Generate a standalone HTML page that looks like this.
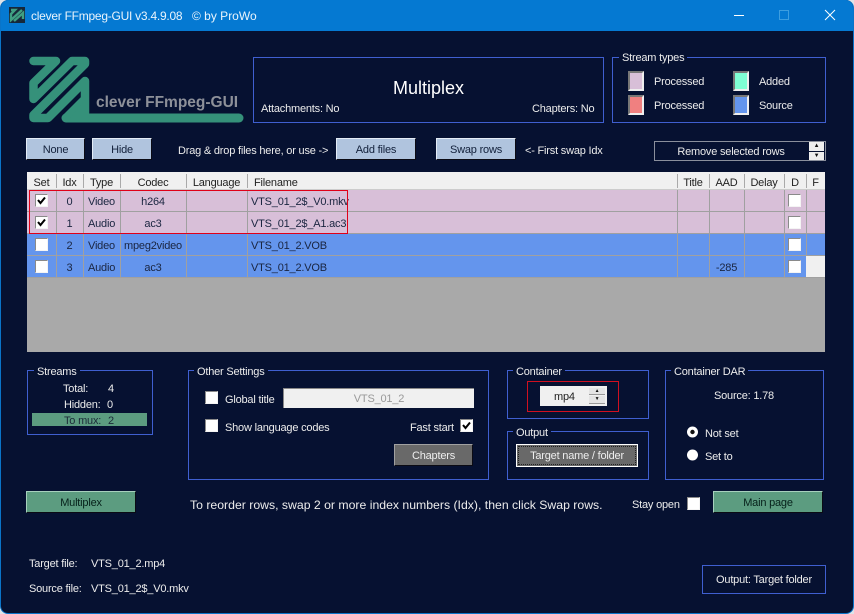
<!DOCTYPE html>
<html><head><meta charset="utf-8"><style>
html,body{margin:0;padding:0;width:854px;height:614px;overflow:hidden;background:#dfe3e8}
*{box-sizing:border-box}
#w{position:absolute;left:0;top:0;width:854px;height:614px;background:#061131;border:1px solid #0a74c8;border-top:0;border-radius:8px;overflow:hidden;font:11px "Liberation Sans",sans-serif;letter-spacing:-.2px;color:#ececec}
#w div,#w span.t{position:absolute;white-space:nowrap}
.t{line-height:14px;transform:translateY(-6px)}
.g{border:1px solid #3f5fd0}
.gt{background:#061131;padding:0 3px;line-height:14px}
.b{text-align:center;line-height:22px;color:#12203a;background:#b0c4de;border:1px solid;border-color:#e4ecf6 #0b0b14 #0b0b14 #e4ecf6}
.gb{background:#5c9c80;color:#06201a;border-color:#a7d0bd #0b0b14 #0b0b14 #a7d0bd}
.c{width:13px;height:13px;background:#fff;border:1px solid;border-color:#8a8a8a #f4f4f4 #f4f4f4 #8a8a8a}
.sw{width:16px;height:20px;border:2px solid;border-color:#777 #eee #eee #777}
.s{width:1px;height:14px;top:174px;background:#aaa}
.l{width:1px;top:190px;height:88px;background:#a0a0a0}
.r{height:1px;left:26px;width:798px;background:#a0a0a0}
.x{color:#1a2540;line-height:14px}
.hd{color:#222;line-height:14px;top:176px}
.ct{text-align:center}
</style></head><body><div id="w">
<div style="left:-1px;top:0;width:856px;height:31px;background:#0579d2"></div>
<svg style="position:absolute;left:8px;top:7px" width="16" height="16" viewBox="0 0 16 16"><rect width="16" height="16" fill="#16283a"/><path d="M2 3H6L2 7V13L13 3M5 14L14 6V12" fill="none" stroke="#3f9f82" stroke-width="2.4"/></svg>
<div style="left:30px;top:8px;font-size:12px;letter-spacing:-.25px;line-height:16px;color:#eaf4fc">clever FFmpeg-GUI v3.4.9.08</div>
<div style="left:191px;top:8px;font-size:12px;letter-spacing:0;line-height:16px;color:#eaf4fc">© by ProWo</div>
<svg style="position:absolute;left:731px;top:8px" width="110" height="16" viewBox="0 0 110 16"><path d="M2 7.5H12" stroke="#fff"/><rect x="47.5" y="2.5" width="9" height="9" fill="none" stroke="#3d9ee0"/><path d="M93 2L103 12M103 2L93 12" stroke="#fff"/></svg>

<svg style="position:absolute;left:27px;top:56px" width="218" height="68" viewBox="28 56 218 68">
<path d="M33.5 61H56L33.5 83V99L72 61H85V64L33.5 115V118H48L85 81V113M66 118L85 99" fill="none" stroke="#35917a" stroke-width="8.5" stroke-linejoin="round" stroke-linecap="round"/>
<path d="M66 118H239" fill="none" stroke="#35917a" stroke-width="9" stroke-linecap="round"/>
<path d="M85 100V118H70Z" fill="#35917a"/>
</svg>
<div style="left:95px;top:94px;font:bold 15.5px/18px 'Liberation Sans',sans-serif;letter-spacing:0;color:#8d9099">clever FFmpeg-GUI</div>

<div class="g" style="left:252px;top:57px;width:351px;height:66px"></div>
<div style="left:252px;top:77px;width:351px;text-align:center;font-size:18px;letter-spacing:0;line-height:22px;color:#fff">Multiplex</div>
<span class="t" style="position:absolute;left:260px;top:108px">Attachments: No</span>
<span class="t" style="position:absolute;left:531px;top:108px">Chapters: No</span>

<div class="g" style="left:611px;top:57px;width:214px;height:66px"></div>
<div class="gt" style="left:618px;top:51px">Stream types</div>
<div class="sw" style="left:627px;top:71px;background:#d8bfd8"></div>
<div class="sw" style="left:627px;top:95px;background:#f08080"></div>
<div class="sw" style="left:732px;top:71px;background:#7fffd4"></div>
<div class="sw" style="left:732px;top:95px;background:#6495ed"></div>
<span class="t" style="position:absolute;left:653px;top:81px">Processed</span>
<span class="t" style="position:absolute;left:653px;top:105px">Processed</span>
<span class="t" style="position:absolute;left:758px;top:81px">Added</span>
<span class="t" style="position:absolute;left:758px;top:105px">Source</span>

<div class="b" style="left:25px;top:138px;width:59px;height:22px">None</div>
<div class="b" style="left:91px;top:138px;width:60px;height:22px">Hide</div>
<span class="t" style="position:absolute;left:177px;top:150px">Drag &amp; drop files here, or use -&gt;</span>
<div class="b" style="left:335px;top:138px;width:80px;height:22px">Add files</div>
<div class="b" style="left:435px;top:138px;width:80px;height:22px">Swap rows</div>
<span class="t" style="position:absolute;left:524px;top:150px">&lt;- First swap Idx</span>
<div style="left:653px;top:141px;width:172px;height:20px;border:1px solid #8a8f9c;text-align:center;line-height:20px;padding-right:18px">Remove selected rows</div>
<div style="left:808px;top:142px;width:15px;height:9px;background:#eee;color:#111;font-size:6px;line-height:9px;text-align:center">▲</div>
<div style="left:808px;top:152px;width:15px;height:8px;background:#eee;color:#111;font-size:6px;line-height:8px;text-align:center">▼</div>

<!-- table -->
<div style="left:26px;top:172px;width:798px;height:180px;background:#a9a9a9"></div>
<div style="left:26px;top:172px;width:798px;height:18px;background:#f0f0f0;border-bottom:1px solid #ccc"></div>
<div style="left:26px;top:190px;width:798px;height:44px;background:#d8bfd8"></div>
<div style="left:26px;top:234px;width:798px;height:44px;background:#6495ed"></div>
<div class="r" style="top:211px"></div><div class="r" style="top:233px"></div><div class="r" style="top:255px"></div><div class="r" style="top:277px"></div>
<div class="l" style="left:55px"></div><div class="l" style="left:82px"></div><div class="l" style="left:119px"></div><div class="l" style="left:185px"></div><div class="l" style="left:246px"></div><div class="l" style="left:676px"></div><div class="l" style="left:708px"></div><div class="l" style="left:743px"></div><div class="l" style="left:783px"></div><div class="l" style="left:805px"></div>
<div style="left:805px;top:256px;width:19px;height:21px;background:#f0f0f0"></div>
<div class="s" style="left:55px"></div><div class="s" style="left:82px"></div><div class="s" style="left:119px"></div><div class="s" style="left:185px"></div><div class="s" style="left:246px"></div><div class="s" style="left:676px"></div><div class="s" style="left:708px"></div><div class="s" style="left:743px"></div><div class="s" style="left:783px"></div><div class="s" style="left:805px"></div>

<div class="hd ct" style="left:26px;width:29px">Set</div>
<div class="hd ct" style="left:55px;width:27px">Idx</div>
<div class="hd ct" style="left:82px;width:37px">Type</div>
<div class="hd ct" style="left:119px;width:66px">Codec</div>
<div class="hd ct" style="left:185px;width:61px">Language</div>
<div class="hd" style="left:253px">Filename</div>
<div class="hd ct" style="left:676px;width:32px">Title</div>
<div class="hd ct" style="left:708px;width:35px">AAD</div>
<div class="hd ct" style="left:743px;width:40px">Delay</div>
<div class="hd ct" style="left:783px;width:22px">D</div>
<div class="hd ct" style="left:805px;width:19px">F</div>

<div class="x ct" style="left:55px;top:195px;width:27px">0</div>
<div class="x ct" style="left:55px;top:217px;width:27px">1</div>
<div class="x ct" style="left:55px;top:239px;width:27px">2</div>
<div class="x ct" style="left:55px;top:261px;width:27px">3</div>
<div class="x" style="left:87px;top:195px">Video</div>
<div class="x" style="left:87px;top:217px">Audio</div>
<div class="x" style="left:87px;top:239px">Video</div>
<div class="x" style="left:87px;top:261px">Audio</div>
<div class="x ct" style="left:119px;top:195px;width:66px">h264</div>
<div class="x ct" style="left:119px;top:217px;width:66px">ac3</div>
<div class="x ct" style="left:119px;top:239px;width:66px">mpeg2video</div>
<div class="x ct" style="left:119px;top:261px;width:66px">ac3</div>
<div class="x" style="left:250px;top:195px">VTS_01_2$_V0.mkv</div>
<div class="x" style="left:250px;top:217px">VTS_01_2$_A1.ac3</div>
<div class="x" style="left:250px;top:239px">VTS_01_2.VOB</div>
<div class="x" style="left:250px;top:261px">VTS_01_2.VOB</div>
<div class="x ct" style="left:708px;top:261px;width:35px">-285</div>

<div class="c" style="left:34px;top:194px"></div><div class="c" style="left:34px;top:216px"></div><div class="c" style="left:34px;top:238px"></div><div class="c" style="left:34px;top:260px"></div>
<svg style="position:absolute;left:34px;top:194px" width="13" height="35" viewBox="0 0 13 35"><path d="M3 6L5.5 9L10 3.5M3 28L5.5 31L10 25.5" fill="none" stroke="#000" stroke-width="2"/></svg>
<div class="c" style="left:787px;top:194px"></div><div class="c" style="left:787px;top:216px"></div><div class="c" style="left:787px;top:238px"></div><div class="c" style="left:787px;top:260px"></div>
<div style="left:28px;top:190px;width:319px;height:44px;border:1px solid #e00018"></div>

<!-- Streams -->
<div class="g" style="left:26px;top:370px;width:126px;height:65px"></div>
<div class="gt" style="left:33px;top:365px">Streams</div>
<span class="t" style="position:absolute;left:62px;top:388px">Total:</span><span class="t" style="position:absolute;left:107px;top:388px">4</span>
<span class="t" style="position:absolute;left:63px;top:404px">Hidden:</span><span class="t" style="position:absolute;left:106px;top:404px">0</span>
<div style="left:31px;top:413px;width:115px;height:13px;background:#5c9c80"></div>
<span class="t" style="position:absolute;left:63px;top:420px;color:#1b2a38">To mux:</span><span class="t" style="position:absolute;left:107px;top:420px;color:#1b2a38">2</span>

<!-- Other -->
<div class="g" style="left:187px;top:370px;width:301px;height:110px"></div>
<div class="gt" style="left:193px;top:365px">Other Settings</div>
<div class="c" style="left:204px;top:391px"></div>
<span class="t" style="position:absolute;left:224px;top:399px">Global title</span>
<div style="left:282px;top:388px;width:191px;height:20px;background:#f0f0f0;border-top:1px solid #888;border-left:1px solid #888;color:#999;text-align:center;line-height:20px">VTS_01_2</div>
<div class="c" style="left:204px;top:419px"></div>
<span class="t" style="position:absolute;left:224px;top:427px">Show language codes</span>
<span class="t" style="position:absolute;left:409px;top:427px">Fast start</span>
<div class="c" style="left:459px;top:419px"></div>
<svg style="position:absolute;left:459px;top:419px" width="13" height="13" viewBox="0 0 13 13"><path d="M3 6L5.5 9L10 3.5" fill="none" stroke="#000" stroke-width="2"/></svg>
<div class="b" style="left:393px;top:444px;width:79px;height:22px;background:#696969;color:#eee;border-color:#a0a0a0 #0b0b14 #0b0b14 #a0a0a0">Chapters</div>

<!-- Container -->
<div class="g" style="left:506px;top:370px;width:142px;height:49px"></div>
<div class="gt" style="left:512px;top:365px">Container</div>
<div style="left:526px;top:381px;width:92px;height:31px;border:1px solid #d01020"></div>
<div style="left:539px;top:386px;width:67px;height:20px;background:#f0f0f0;color:#222;line-height:22px;padding-left:14px">mp4</div>
<div style="left:588px;top:388px;width:16px;height:7px;background:#e4e4e4;color:#111;font-size:5px;line-height:7px;text-align:center;border-bottom:1px solid #999">▲</div>
<div style="left:588px;top:396px;width:16px;height:8px;background:#e4e4e4;color:#111;font-size:5px;line-height:7px;text-align:center;border-bottom:1px solid #999">▼</div>

<!-- Output -->
<div class="g" style="left:506px;top:431px;width:142px;height:49px"></div>
<div class="gt" style="left:512px;top:426px">Output</div>
<div style="left:515px;top:444px;width:122px;height:23px;background:#696969;border:1px solid #fff;outline:1px dotted #222;outline-offset:-3px;color:#eee;text-align:center;line-height:23px">Target name / folder</div>

<!-- DAR -->
<div class="g" style="left:664px;top:370px;width:159px;height:110px"></div>
<div class="gt" style="left:670px;top:365px">Container DAR</div>
<span class="t" style="position:absolute;left:713px;top:395px">Source: 1.78</span>
<svg style="position:absolute;left:685px;top:425px" width="14" height="38" viewBox="0 0 14 38"><circle cx="6.5" cy="7" r="5.5" fill="#fff"/><circle cx="6.5" cy="7" r="2.2" fill="#111"/><circle cx="6.5" cy="30" r="5.5" fill="#fff"/></svg>
<span class="t" style="position:absolute;left:704px;top:433px">Not set</span>
<span class="t" style="position:absolute;left:704px;top:456px">Set to</span>

<!-- bottom -->
<div class="b gb" style="left:25px;top:491px;width:110px;height:22px">Multiplex</div>
<span class="t" style="position:absolute;left:189px;top:504px;font-size:12.25px;letter-spacing:0">To reorder rows, swap 2 or more index numbers (Idx), then click Swap rows.</span>
<span class="t" style="position:absolute;left:631px;top:504px">Stay open</span>
<div class="c" style="left:686px;top:497px"></div>
<div class="b gb" style="left:712px;top:491px;width:110px;height:22px">Main page</div>

<span class="t" style="position:absolute;left:28px;top:563px">Target file:</span>
<span class="t" style="position:absolute;left:90px;top:563px">VTS_01_2.mp4</span>
<span class="t" style="position:absolute;left:28px;top:588px">Source file:</span>
<span class="t" style="position:absolute;left:90px;top:588px">VTS_01_2$_V0.mkv</span>
<div class="g" style="left:701px;top:565px;width:124px;height:29px;text-align:center;line-height:28px">Output: Target folder</div>
</div></body></html>
